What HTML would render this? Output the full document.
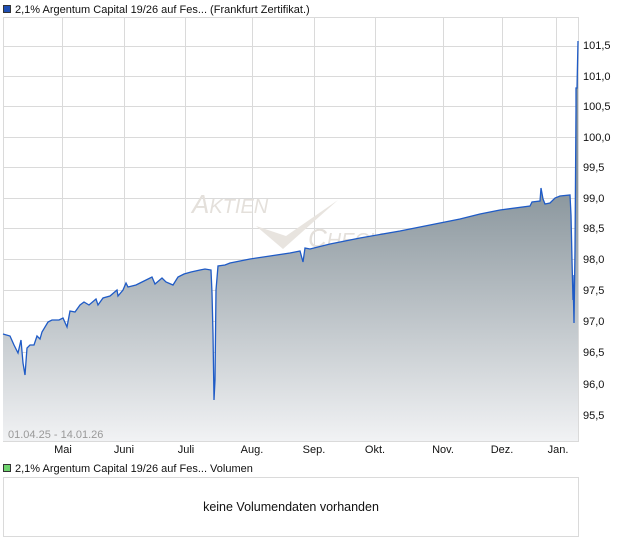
<!DOCTYPE html>
<html><head><meta charset="utf-8"><style>
body{margin:0;width:620px;height:546px;background:#fff;font-family:"Liberation Sans",sans-serif;overflow:hidden}
</style></head><body>
<svg width="620" height="546" xmlns="http://www.w3.org/2000/svg" font-family="Liberation Sans, sans-serif">
<defs><linearGradient id="g" gradientUnits="userSpaceOnUse" x1="0" y1="190" x2="0" y2="441">
<stop offset="0" stop-color="#8a969d"/><stop offset="1" stop-color="#f1f2f4"/></linearGradient></defs>
<rect x="3.5" y="5.5" width="7" height="7" fill="#1f4fb4" stroke="#333" stroke-width="1"/>
<text x="15" y="13" font-size="11" fill="#111">2,1% Argentum Capital 19/26 auf Fes... (Frankfurt Zertifikat.)</text>
<g stroke="#dadada" stroke-width="1">
<rect x="3.5" y="17.5" width="575" height="424" fill="none"/>
<path d="M62.5 17V441M124.5 17V441M185.5 17V441M252.5 17V441M314.5 17V441M375.5 17V441M443.5 17V441M502.5 17V441M556.5 17V441"/>
<path d="M3 46.5H578M3 76.5H578M3 106.5H578M3 137.5H578M3 167.5H578M3 198.5H578M3 228.5H578M3 259.5H578M3 290.5H578M3 321.5H578M3 352.5H578M3 384.5H578M3 415.5H578"/>
</g>
<g fill="#e4e0db" font-style="italic" font-size="26"><text x="192" y="213">A<tspan font-size="20">KTIEN</tspan></text><text x="308" y="247">C<tspan font-size="20">HECK</tspan></text></g>
<path d="M256 226 L283 249 L338 200 L286 236 Z" fill="#e8e4df"/>
<path d="M3,334 L10,336 L14,345 L18,353 L21,340 L23,363 L25,375 L27,348 L30,345 L34,345 L37,336 L40,339 L42,332 L48,322 L52,320 L59,320 L63,318 L67,327 L70,311 L75,312 L80,305 L84,302 L89,305 L96,299 L98,305 L103,298 L110,296 L117,290 L118,296 L123,290 L126,283 L128,287 L136,285 L140,283 L152,277 L155,284 L162,278 L166,282 L173,285 L178,277 L184,274 L191,272 L200,270 L205,269 L211,270 L212,293 L213,334 L214,400 L215,380 L216,290 L218,266 L225,265 L230,263 L250,259 L270,256 L290,253 L300,251 L303,262 L305,248 L310,249 L330,244 L360,238 L400,231 L430,225 L460,219 L480,214 L500,210 L530,206 L532,202 L540,201 L541,188 L543,199 L545,204 L550,203 L555,198 L560,196 L570,195 L571,215 L572,260 L573,300 L573,275 L574,323 L575,250 L576,110 L576,88 L577,88 L578,41 L578,441 L3,441 Z" fill="url(#g)"/>
<path d="M3,334 L10,336 L14,345 L18,353 L21,340 L23,363 L25,375 L27,348 L30,345 L34,345 L37,336 L40,339 L42,332 L48,322 L52,320 L59,320 L63,318 L67,327 L70,311 L75,312 L80,305 L84,302 L89,305 L96,299 L98,305 L103,298 L110,296 L117,290 L118,296 L123,290 L126,283 L128,287 L136,285 L140,283 L152,277 L155,284 L162,278 L166,282 L173,285 L178,277 L184,274 L191,272 L200,270 L205,269 L211,270 L212,293 L213,334 L214,400 L215,380 L216,290 L218,266 L225,265 L230,263 L250,259 L270,256 L290,253 L300,251 L303,262 L305,248 L310,249 L330,244 L360,238 L400,231 L430,225 L460,219 L480,214 L500,210 L530,206 L532,202 L540,201 L541,188 L543,199 L545,204 L550,203 L555,198 L560,196 L570,195 L571,215 L572,260 L573,300 L573,275 L574,323 L575,250 L576,110 L576,88 L577,88 L578,41" fill="none" stroke="#1f5bc6" stroke-width="1.3"/>
<g font-size="11" fill="#111">
<text x="583" y="49">101,5</text><text x="583" y="80">101,0</text><text x="583" y="110">100,5</text><text x="583" y="141">100,0</text><text x="583" y="171">99,5</text><text x="583" y="202">99,0</text><text x="583" y="232">98,5</text><text x="583" y="263">98,0</text><text x="583" y="294">97,5</text><text x="583" y="325">97,0</text><text x="583" y="356">96,5</text><text x="583" y="388">96,0</text><text x="583" y="419">95,5</text>
</g>
<text x="8" y="438" font-size="11" fill="#999">01.04.25 - 14.01.26</text>
<g font-size="11" fill="#111" text-anchor="middle">
<text x="63" y="453">Mai</text><text x="124" y="453">Juni</text><text x="186" y="453">Juli</text><text x="252" y="453">Aug.</text><text x="314" y="453">Sep.</text><text x="375" y="453">Okt.</text><text x="443" y="453">Nov.</text><text x="502" y="453">Dez.</text><text x="558" y="453">Jan.</text>
</g>
<rect x="3.5" y="464.5" width="7" height="7" fill="#6fd46f" stroke="#333" stroke-width="1"/>
<text x="15" y="472" font-size="11" fill="#111">2,1% Argentum Capital 19/26 auf Fes... Volumen</text>
<rect x="3.5" y="477.5" width="575" height="59" fill="none" stroke="#dadada"/>
<text x="291" y="511" font-size="12.5" fill="#111" text-anchor="middle">keine Volumendaten vorhanden</text>
</svg>
</body></html>
